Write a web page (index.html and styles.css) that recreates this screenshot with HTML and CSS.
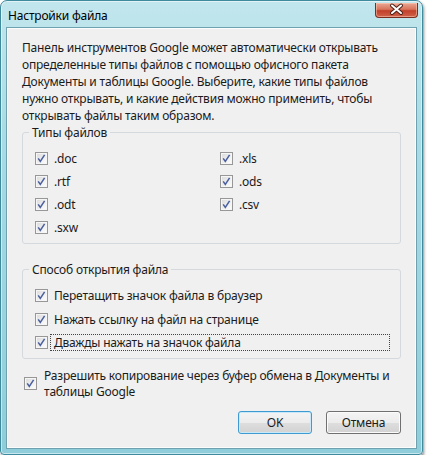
FILE: index.html
```html
<!DOCTYPE html>
<html lang="ru">
<head>
    <meta charset="UTF-8">
    <meta name="viewport" content="width=device-width, initial-scale=1.0">
    <title>Настройки файла</title>
    <link rel="stylesheet" href="styles.css">
</head>
<body>

    <div class="window">
        <div class="titlebar">
            <span class="title">Настройки файла</span>
            <span class="close">
                <svg width="43" height="15" viewBox="0 0 43 15">
                    <path d="M17 3.5 L26 11 M26 3.5 L17 11" stroke="#4a2018" stroke-width="4" stroke-linecap="round"/>
                    <path d="M17 3.5 L26 11 M26 3.5 L17 11" stroke="#fff" stroke-width="2" stroke-linecap="round"/>
                </svg>
            </span>
        </div>

        <div class="client">
            <p class="intro">Панель инструментов Google может автоматически открывать<br>определенные типы файлов с помощью офисного пакета<br>Документы и таблицы Google. Выберите, какие типы файлов<br>нужно открывать, и какие действия можно применить, чтобы<br>открывать файлы таким образом.</p>

            <fieldset class="group">
                <legend>Типы файлов</legend>
                <div class="types">
                    <label class="check"><span class="box"><svg width="11" height="11" viewBox="0 0 11 11"><path d="M2.2 5.4 L4.3 8.4 L8.6 1.9" fill="none" stroke="#4a5f9e" stroke-width="1.5"/></svg></span><span class="txt">.doc</span></label>
                    <label class="check"><span class="box"><svg width="11" height="11" viewBox="0 0 11 11"><path d="M2.2 5.4 L4.3 8.4 L8.6 1.9" fill="none" stroke="#4a5f9e" stroke-width="1.5"/></svg></span><span class="txt">.rtf</span></label>
                    <label class="check"><span class="box"><svg width="11" height="11" viewBox="0 0 11 11"><path d="M2.2 5.4 L4.3 8.4 L8.6 1.9" fill="none" stroke="#4a5f9e" stroke-width="1.5"/></svg></span><span class="txt">.odt</span></label>
                    <label class="check"><span class="box"><svg width="11" height="11" viewBox="0 0 11 11"><path d="M2.2 5.4 L4.3 8.4 L8.6 1.9" fill="none" stroke="#4a5f9e" stroke-width="1.5"/></svg></span><span class="txt">.sxw</span></label>
                    <label class="check"><span class="box"><svg width="11" height="11" viewBox="0 0 11 11"><path d="M2.2 5.4 L4.3 8.4 L8.6 1.9" fill="none" stroke="#4a5f9e" stroke-width="1.5"/></svg></span><span class="txt">.xls</span></label>
                    <label class="check"><span class="box"><svg width="11" height="11" viewBox="0 0 11 11"><path d="M2.2 5.4 L4.3 8.4 L8.6 1.9" fill="none" stroke="#4a5f9e" stroke-width="1.5"/></svg></span><span class="txt">.ods</span></label>
                    <label class="check"><span class="box"><svg width="11" height="11" viewBox="0 0 11 11"><path d="M2.2 5.4 L4.3 8.4 L8.6 1.9" fill="none" stroke="#4a5f9e" stroke-width="1.5"/></svg></span><span class="txt">.csv</span></label>
                </div>
            </fieldset>

            <fieldset class="group">
                <legend>Способ открытия файла</legend>
                <div class="methods">
                    <label class="check"><span class="box"><svg width="11" height="11" viewBox="0 0 11 11"><path d="M2.2 5.4 L4.3 8.4 L8.6 1.9" fill="none" stroke="#4a5f9e" stroke-width="1.5"/></svg></span><span class="txt">Перетащить значок файла в браузер</span></label>
                    <label class="check"><span class="box"><svg width="11" height="11" viewBox="0 0 11 11"><path d="M2.2 5.4 L4.3 8.4 L8.6 1.9" fill="none" stroke="#4a5f9e" stroke-width="1.5"/></svg></span><span class="txt">Нажать ссылку на файл на странице</span></label>
                    <label class="check"><span class="box"><svg width="11" height="11" viewBox="0 0 11 11"><path d="M2.2 5.4 L4.3 8.4 L8.6 1.9" fill="none" stroke="#4a5f9e" stroke-width="1.5"/></svg></span><span class="txt focused">Дважды нажать на значок файла</span></label>
                </div>
            </fieldset>

            <label class="allow"><span class="box"><svg width="11" height="11" viewBox="0 0 11 11"><path d="M2.2 5.4 L4.3 8.4 L8.6 1.9" fill="none" stroke="#4a5f9e" stroke-width="1.5"/></svg></span><span class="allow-text">Разрешить копирование через буфер обмена в Документы и<br>таблицы Google</span></label>

            <div class="buttons">
                <button class="btn default">OK</button>
                <button class="btn">Отмена</button>
            </div>
        </div>
    </div>

</body>
</html>
```

FILE: styles.css
```css
/* Общие стили */
body {
    margin: 0;
    background-color: #ffffff;
    font-family: "Noto Sans", "Open Sans", sans-serif;
    font-size: 12px;
    letter-spacing: -0.2px;
    color: #1b1b1b;
}

/* Окно в стиле Vista */
.window {
    width: 423px;
    height: 455px;
    box-sizing: border-box;
    padding: 0 6px 6px 6px;
    display: flex;
    flex-direction: column;
    border: 1px solid #3f8a9d;
    border-radius: 7px 7px 4px 4px;
    background: linear-gradient(180deg, #c2e6ed 0%, #a8dbe5 30%, #8fcddb 100%);
    box-shadow: inset 0 0 0 1px rgba(255, 255, 255, 0.5), 1px 2px 3px rgba(0, 0, 0, 0.45);
}

.titlebar {
    height: 27px;
    display: flex;
    align-items: flex-start;
}

.title {
    padding: 7px 0 0 1px;
    line-height: 16px;
    color: #000;
}

.close {
    margin-left: auto;
    margin-right: -2px;
    margin-top: 2px;
    width: 43px;
    height: 15px;
    box-sizing: border-box;
    border: 1px solid #7a2e20;
    border-top: none;
    border-radius: 0 0 4px 4px;
    background: linear-gradient(180deg, #eaa894 0%, #d8745c 45%, #c2412a 55%, #d0624a 100%);
    box-shadow: inset 0 0 0 1px rgba(255, 210, 190, 0.5);
}

.close svg {
    display: block;
    margin: -1px 0 0 -1px;
}

/* Клиентская область */
.client {
    flex: 1;
    background-color: #f0f0f0;
    border: 1px solid #fbfdfd;
    box-shadow: 0 0 0 1px #6fa2b0;
    padding: 10px 14px 0 14px;
}

.intro {
    margin: 0;
    line-height: 17px;
}

/* Группы */
.group {
    margin: 0;
    padding: 0 12px 4px 12px;
    border: 1px solid #d3d9dd;
    border-radius: 3px;
}

.group + .group {
    margin-top: 17px;
    padding-bottom: 3px;
}

.group legend {
    padding: 0 3px;
    margin-left: -6px;
    line-height: 17px;
}

.types {
    display: grid;
    grid-template-columns: 185px 1fr;
    grid-template-rows: repeat(4, 23px);
    grid-auto-flow: column;
    padding-top: 6px;
}

.methods {
    display: grid;
    grid-template-rows: repeat(3, 23.5px);
    padding-top: 6px;
}

.check {
    display: flex;
    align-items: center;
}

.check .txt {
    padding: 0 4px;
    margin-left: 2px;
    line-height: 17px;
}

.check .focused {
    flex: 1;
    margin-right: -2px;
    outline: 1px dotted #444;
    outline-offset: -1px;
}

/* Флажок */
.box {
    width: 13px;
    height: 13px;
    box-sizing: border-box;
    flex-shrink: 0;
    border: 1px solid #979797;
    background: linear-gradient(135deg, #dadada 0%, #f0f0f0 60%, #ffffff 100%);
    box-shadow: inset 0 0 0 1px #f6f6f6;
}

.box svg {
    display: block;
}

.allow {
    display: flex;
    align-items: center;
    margin: 9px 0 0 2px;
}

.allow .box {
    margin-right: 7px;
}

.allow-text {
    line-height: 16px;
}

/* Кнопки */
.buttons {
    display: flex;
    justify-content: flex-end;
    gap: 14px;
    margin-top: 11px;
}

.btn {
    width: 75px;
    height: 23px;
    padding: 0;
    font-family: inherit;
    font-size: 12px;
    letter-spacing: -0.2px;
    color: #1b1b1b;
    border: 1px solid #707070;
    border-radius: 3px;
    background: linear-gradient(180deg, #f4f4f4 0%, #ececec 50%, #dedede 51%, #d2d2d2 100%);
    box-shadow: inset 0 0 0 1px #fbfbfb;
}

.btn.default {
    width: 74px;
    border-color: #3d9bd2;
    box-shadow: inset 0 0 0 1px #c9e9f9;
}
```
